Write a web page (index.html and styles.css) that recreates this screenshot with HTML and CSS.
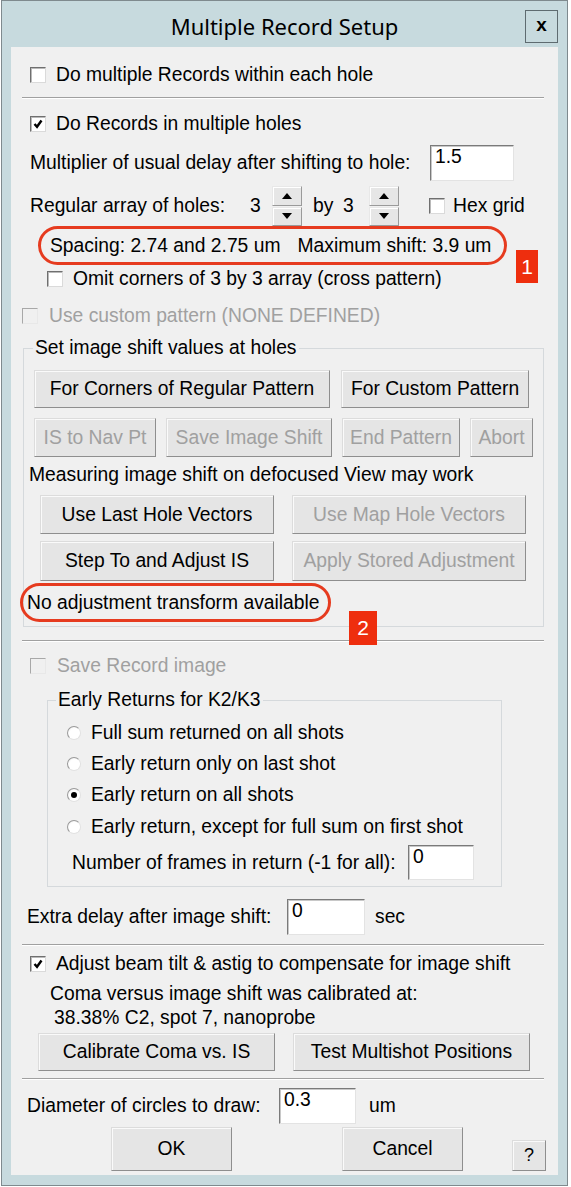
FILE: index.html
```html
<!DOCTYPE html>
<html>
<head>
<meta charset="utf-8">
<link rel="stylesheet" href="styles.css">
</head>
<body>
<div class="window">
  <div class="titlebar">
    <div></div>
    <div class="title">Multiple Record Setup</div>
    <div class="close">x</div>
  </div>
  <div class="content">
    <div class="row r-multi"><span class="cb"></span><span>Do multiple Records within each hole</span></div>
    <div class="sep sep1"></div>
    <div class="row r-holes"><span class="cb"><svg viewBox="0 0 14 14" width="14" height="14"><path d="M3.5 7 L6 9.8 L10.5 3.5" fill="none" stroke="#000" stroke-width="2.4"/></svg></span><span>Do Records in multiple holes</span></div>
    <div class="row r-mult"><span class="lbl-mult">Multiplier of usual delay after shifting to hole:</span><span class="edit e-mult">1.5</span></div>
    <div class="row r-array">
      <span class="lbl-array">Regular array of holes:</span>
      <span class="val v1">3</span>
      <span class="spin"><span class="sb"><i class="tri-up"></i></span><span class="sb"><i class="tri-down"></i></span></span>
      <span class="by">by</span>
      <span class="val v2">3</span>
      <span class="spin"><span class="sb"><i class="tri-up"></i></span><span class="sb"><i class="tri-down"></i></span></span>
      <span class="cb cb-hex"></span><span>Hex grid</span>
    </div>
    <div class="row oval oval1"><span>Spacing: 2.74 and 2.75 um</span><span class="maxshift">Maximum shift: 3.9 um</span><span class="badge badge1">1</span></div>
    <div class="row r-omit"><span class="cb"></span><span>Omit corners of 3 by 3 array (cross pattern)</span></div>
    <div class="row r-custom disabled"><span class="cb cb-dis"></span><span>Use custom pattern (NONE DEFINED)</span></div>

    <div class="group group1">
      <span class="glabel g1label">Set image shift values at holes</span>
      <div class="btnrow br1"><span class="btn w296">For Corners of Regular Pattern</span><span class="btn w188">For Custom Pattern</span></div>
      <div class="btnrow br2"><span class="btn dis w122">IS to Nav Pt</span><span class="btn dis w166">Save Image Shift</span><span class="btn dis w118">End Pattern</span><span class="btn dis w63">Abort</span></div>
      <div class="text t-measure">Measuring image shift on defocused View may work</div>
      <div class="btnrow br3"><span class="btn w234">Use Last Hole Vectors</span><span class="btn dis w234">Use Map Hole Vectors</span></div>
      <div class="btnrow br4"><span class="btn w234">Step To and Adjust IS</span><span class="btn dis w234">Apply Stored Adjustment</span></div>
      <div class="row oval oval2"><span>No adjustment transform available</span><span class="badge badge2">2</span></div>
    </div>

    <div class="sep sep2"></div>
    <div class="row r-save disabled"><span class="cb cb-dis"></span><span>Save Record image</span></div>

    <div class="group group2">
      <span class="glabel g2label">Early Returns for K2/K3</span>
      <div class="row radio rr1"><span class="rb"></span><span>Full sum returned on all shots</span></div>
      <div class="row radio rr2"><span class="rb"></span><span>Early return only on last shot</span></div>
      <div class="row radio rr3"><span class="rb on"></span><span>Early return on all shots</span></div>
      <div class="row radio rr4"><span class="rb"></span><span>Early return, except for full sum on first shot</span></div>
      <div class="row r-frames"><span class="lbl-frames">Number of frames in return (-1 for all):</span><span class="edit e-frames">0</span></div>
    </div>

    <div class="row r-extra"><span class="lbl-extra">Extra delay after image shift:</span><span class="edit e-extra">0</span><span class="unit">sec</span></div>
    <div class="sep sep3"></div>
    <div class="row r-adjust"><span class="cb"><svg viewBox="0 0 14 14" width="14" height="14"><path d="M3.5 7 L6 9.8 L10.5 3.5" fill="none" stroke="#000" stroke-width="2.4"/></svg></span><span>Adjust beam tilt &amp; astig to compensate for image shift</span></div>
    <div class="text t-coma">Coma versus image shift was calibrated at:</div>
    <div class="text t-cal">38.38% C2, spot 7, nanoprobe</div>
    <div class="btnrow br5"><span class="btn w237">Calibrate Coma vs. IS</span><span class="btn w237">Test Multishot Positions</span></div>
    <div class="sep sep4"></div>
    <div class="row r-diam"><span class="lbl-diam">Diameter of circles to draw:</span><span class="edit e-diam">0.3</span><span class="unit u-um">um</span></div>
    <div class="bottomrow"><span class="btn b-ok">OK</span><span class="btn b-cancel">Cancel</span><span class="btn b-help">?</span></div>
  </div>
</div>
</body>
</html>
```
FILE: styles.css
```css
* { box-sizing: border-box; }
html, body { margin: 0; padding: 0; background: #ffffff; }
body { width: 571px; height: 1187px; overflow: hidden; }

.window {
  margin-left: 1px;
  width: 567px;
  height: 1186px;
  background: #c7dade;
  border: 1px solid #7f8a8e;
  padding: 0 9px 9px 9px;
}

.titlebar {
  height: 46px;
  display: grid;
  grid-template-columns: 1fr auto 1fr;
  align-items: start;
}
.title {
  font-family: "Noto Sans", "Open Sans", sans-serif;
  font-size: 22px;
  color: #000;
  line-height: 26px;
  padding-top: 12px;
}
.close {
  justify-self: end;
  margin-top: 9px;
  width: 33px;
  height: 33px;
  border: 1px solid #5e6b70;
  font-family: "Liberation Sans", Arial, sans-serif;
  font-weight: bold;
  font-size: 19px;
  line-height: 28px;
  text-align: center;
  color: #000;
}

.content {
  background: #f0f0f0;
  height: 1128px;
  display: flex;
  flex-direction: column;
  align-items: flex-start;
  font-family: "Liberation Sans", Arial, sans-serif;
  font-size: 19.3px;
  color: #000;
  position: relative;
}

.row { display: flex; align-items: center; height: 24px; white-space: nowrap; }
.text { height: 22px; line-height: 22px; white-space: nowrap; }
.disabled { color: #a0a0a0; }

.cb {
  width: 16px; height: 16px;
  background: #fff;
  border: 1px solid;
  border-color: #6f6f6f #dadada #dadada #6f6f6f;
  box-shadow: inset 1px 1px 0 #b9b9b9;
  margin-right: 10px;
  display: flex; align-items: center; justify-content: center;
  flex: 0 0 auto;
}
.cb svg { display: block; }
.cb-dis { background: #f0f0f0; border-color: #a8a8a8 #e8e8e8 #e8e8e8 #a8a8a8; box-shadow: none; margin-right: 11px; }

.sep {
  margin-left: 11px;
  width: 522px;
  height: 2px;
  border-top: 1px solid #a0a0a0;
  border-bottom: 1px solid #ffffff;
}

.r-multi { margin: 16px 0 0 19px; }
.sep1 { margin-top: 10px; }
.r-holes { margin: 13px 0 0 19px; }
.r-mult { margin: 9px 0 0 19px; height: 36px; }
.lbl-mult { width: 400px; }

.edit {
  align-self: stretch;
  background: #fff;
  border: 1px solid;
  border-color: #7a7a7a #e3e3e3 #e3e3e3 #7a7a7a;
  box-shadow: inset 1px 1px 0 #c8c8c8;
  padding: 1px 0 0 4px;
  line-height: 20px;
}
.e-mult { width: 84px; }

.r-array { margin: 5px 0 0 19px; height: 40px; }
.lbl-array { width: 220px; }
.val { width: 22px; }
.v2 { width: 26px; }
.by { margin-left: 11px; width: 30px; }
.spin {
  width: 30px; height: 40px;
  display: flex; flex-direction: column; gap: 1px;
}
.sb {
  flex: 1;
  background: #e6e6e6;
  border: 1px solid;
  border-color: #e8e8e8 #9a9a9a #9a9a9a #e8e8e8;
  box-shadow: inset 1px 1px 0 #fff;
  display: flex; align-items: center; justify-content: center;
}
.tri-up { width: 0; height: 0; border-left: 5px solid transparent; border-right: 5px solid transparent; border-bottom: 6px solid #000; }
.tri-down { width: 0; height: 0; border-left: 5px solid transparent; border-right: 5px solid transparent; border-top: 6px solid #000; }
.cb-hex { margin-left: 30px; margin-right: 8px; }

.oval {
  border: 3px solid #e63b1f;
  border-radius: 20px;
  position: relative;
}
.oval1 { margin: 0 0 0 27px; width: 469px; height: 39px; padding-left: 9px; }
.maxshift { margin-left: 17px; }
.badge {
  position: absolute;
  background: #ee2e0e;
  color: #fff;
  font-size: 21px;
  display: flex; align-items: center; justify-content: center;
}
.badge1 { left: 475px; top: 21px; width: 22px; height: 33px; }

.r-omit { margin: 2px 0 0 36px; }
.r-custom { margin: 13px 0 0 11px; }

.group {
  border: 1px solid #d5d9dc;
  display: flex; flex-direction: column; align-items: flex-start;
  position: relative;
}
.glabel {
  height: 22px; line-height: 22px;
  margin-top: -12px;
  background: #f0f0f0;
  padding: 0 2px;
  white-space: nowrap;
}
.group1 { margin: 20px 0 0 12px; width: 521px; height: 279px; }
.g1label { margin-left: 9px; }

.btnrow { display: flex; }
.btn {
  display: flex; align-items: center; justify-content: center;
  background: #e5e5e5;
  border: 1px solid;
  border-color: #dcdcdc #8e8e8e #8e8e8e #dcdcdc;
  box-shadow: inset 1px 1px 0 #fafafa;
  white-space: nowrap;
}
.btn.dis { color: #a0a0a0; }
.br1 { margin: 11px 0 0 10px; height: 38px; gap: 11px; }
.br2 { margin: 10px 0 0 10px; height: 39px; gap: 10px; }
.br3 { margin: 9px 0 0 16px; height: 39px; gap: 18px; }
.br4 { margin: 7px 0 0 16px; height: 40px; gap: 18px; }
.w296 { width: 296px; } .w188 { width: 188px; }
.w122 { width: 122px; } .w166 { width: 166px; } .w118 { width: 118px; } .w63 { width: 63px; }
.w234 { width: 234px; } .w237 { width: 237px; }
.t-measure { margin: 7px 0 0 5px; }
.oval2 { margin: 2px 0 0 -4px; width: 311px; height: 39px; padding-left: 4px; }
.badge2 { left: 326px; top: 25px; width: 28px; height: 34px; }

.sep2 { margin-top: 13px; }
.r-save { margin: 12px 0 0 19px; }

.group2 { margin: 22px 0 0 36px; width: 455px; height: 187px; }
.g2label { margin-left: 8px; }
.radio { margin-left: 19px; }
.rr1 { margin-top: 10px; }
.rr2, .rr3 { margin-top: 7px; }
.rr4 { margin-top: 8px; }
.rb {
  width: 14px; height: 14px; border-radius: 50%;
  background: radial-gradient(circle at 60% 60%, #ffffff 55%, #e9e9e9 100%);
  border: 1px solid;
  border-color: #9a9a9a #e2e2e2 #e2e2e2 #9a9a9a;
  margin-right: 10px;
  position: relative;
  flex: 0 0 auto;
}
.rb.on::after {
  content: "";
  position: absolute;
  left: 3px; top: 3px;
  width: 6px; height: 6px; border-radius: 50%;
  background: #000;
}
.r-frames { margin: 6px 0 0 24px; height: 35px; }
.lbl-frames { width: 336px; }
.e-frames { width: 66px; }

.r-extra { margin: 12px 0 0 16px; height: 36px; }
.lbl-extra { width: 260px; }
.e-extra { width: 78px; }
.unit { margin-left: 10px; }

.sep3 { margin-top: 9px; }
.r-adjust { margin: 6px 0 0 19px; }
.t-coma { margin: 7px 0 0 39px; }
.t-cal { margin: 2px 0 0 43px; }
.br5 { margin: 4px 0 0 27px; height: 38px; gap: 18px; }
.sep4 { margin-top: 7px; }
.r-diam { margin: 8px 0 0 16px; height: 36px; }
.lbl-diam { width: 252px; }
.e-diam { width: 77px; }
.u-um { margin-left: 13px; }

.bottomrow { display: flex; align-items: flex-end; margin: 3px 0 0 100px; height: 44px; }
.b-ok { width: 121px; height: 44px; }
.b-cancel { width: 121px; height: 44px; margin-left: 110px; }
.b-help { width: 34px; height: 31px; margin-left: 49px; font-size: 18px; }
```
